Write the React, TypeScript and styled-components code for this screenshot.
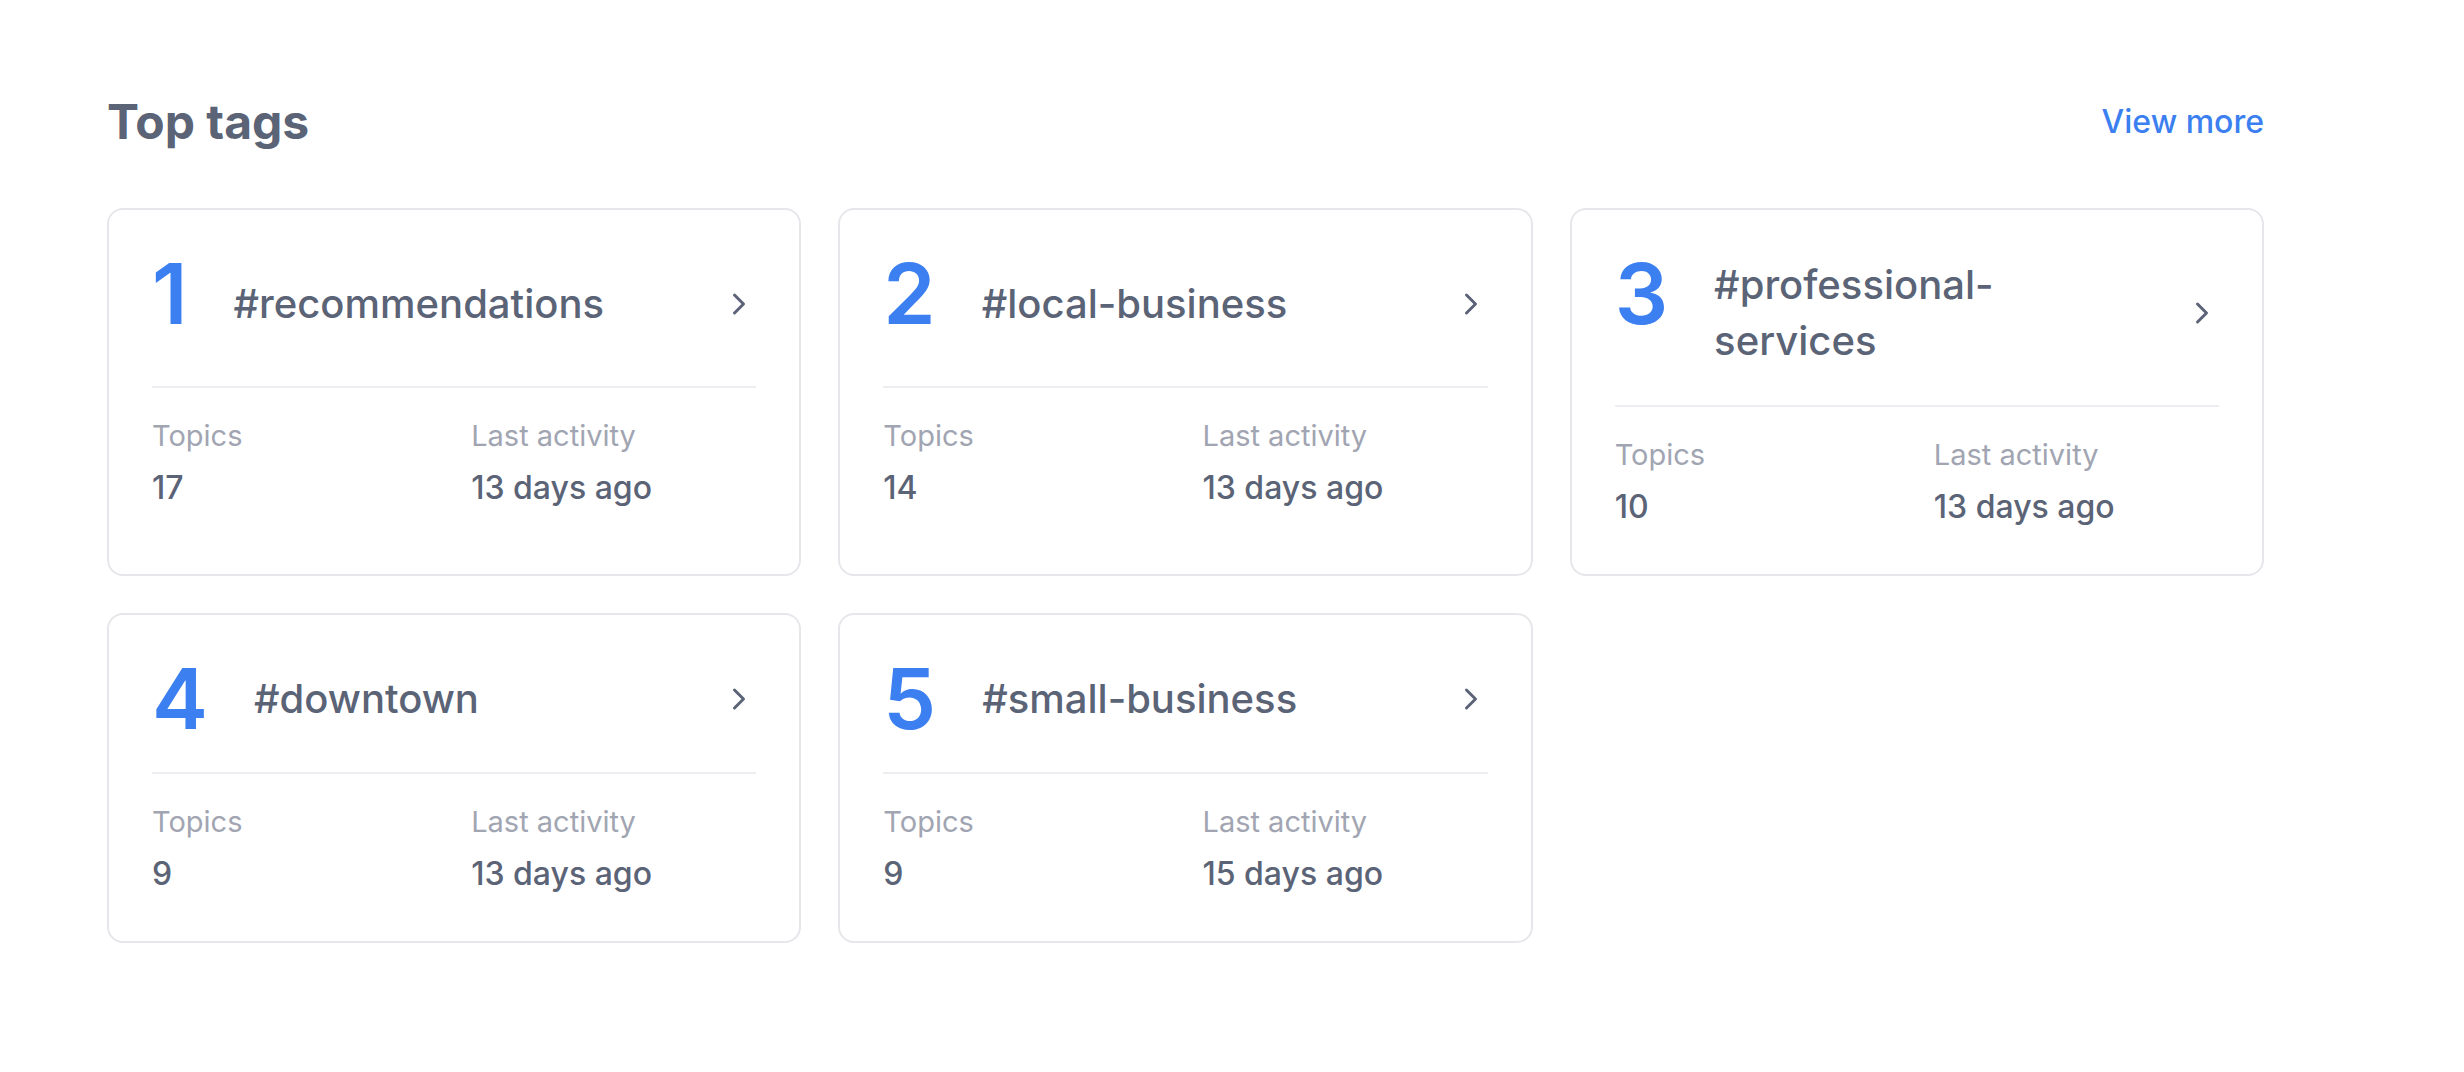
import React from 'react';
import styled, { createGlobalStyle } from 'styled-components';

interface Tag {
    rank: number;
    name: string;
    topics: number;
    lastActivity: string;
}

const tags: Tag[] = [
    { rank: 1, name: '#recommendations', topics: 17, lastActivity: '13 days ago' },
    { rank: 2, name: '#local-business', topics: 14, lastActivity: '13 days ago' },
    { rank: 3, name: '#professional-services', topics: 10, lastActivity: '13 days ago' },
    { rank: 4, name: '#downtown', topics: 9, lastActivity: '13 days ago' },
    { rank: 5, name: '#small-business', topics: 9, lastActivity: '15 days ago' },
];

const GlobalStyle = createGlobalStyle`
    html, body {
        margin: 0;
        padding: 0;
        background: #ffffff;
        font-family: Inter, "Noto Sans", "Liberation Sans", sans-serif;
        -webkit-font-smoothing: antialiased;
    }
`

const Page = styled.main`
    box-sizing: border-box;
    width: 2264px;
    padding: 90px 0 0 107px;
`

const SectionHeader = styled.div`
    display: flex;
    align-items: center;
    justify-content: space-between;
    height: 64px;
    margin-bottom: 54px;
`

const Title = styled.h2`
    margin: 0;
    font-size: 48px;
    line-height: 64px;
    font-weight: 650;
    color: #5b6376;
`

const ViewMore = styled.a`
    font-size: 32px;
    line-height: 48px;
    font-weight: 500;
    color: #3b7ff0;
    text-decoration: none;
    cursor: pointer;
`

const Grid = styled.div`
    display: grid;
    grid-template-columns: repeat(3, 1fr);
    gap: 37px;
`

const Card = styled.div`
    box-sizing: border-box;
    display: flex;
    flex-direction: column;
    border: 2px solid #e6e7eb;
    border-radius: 16px;
    padding: 47px 43px 43px;
    background: #ffffff;
`

const Header = styled.div`
    flex: 1 1 auto;
    display: flex;
    align-items: center;
    gap: 30px;
    margin-bottom: 36px;
`

const Rank = styled.span`
    align-self: flex-start;
    font-size: 84px;
    line-height: 74px;
    font-weight: 600;
    color: #3b7ff0;
    margin-right: 16px;
`

const TagName = styled.span`
    flex: 1;
    font-size: 40px;
    line-height: 56px;
    font-weight: 500;
    color: #5b6376;
`

const Chevron = styled.svg`
    flex-shrink: 0;
    width: 40px;
    height: 40px;
    color: #5b6376;
`

const Footer = styled.div`
    flex: 1 1 auto;
    border-top: 2px solid #eceef1;
    padding-top: 28px;
`

const Stats = styled.div`
    display: grid;
    grid-template-columns: repeat(2, 1fr);
    column-gap: 34px;
`

const Label = styled.div`
    font-size: 29px;
    line-height: 40px;
    font-weight: 400;
    color: #a1a5b2;
`

const Value = styled.div`
    margin-top: 8px;
    font-size: 32px;
    line-height: 48px;
    font-weight: 500;
    color: #5b6376;
`

const TagCard = ({ tag }: { tag: Tag }) => (
    <Card>
        <Header>
            <Rank>{tag.rank}</Rank>
            <TagName>{tag.name}</TagName>
            <Chevron viewBox="0 0 40 40" fill="none">
                <polyline
                    points="18.5,11 27.5,20 18.5,29"
                    stroke="currentColor"
                    strokeWidth="3"
                    strokeLinecap="round"
                    strokeLinejoin="round"
                />
            </Chevron>
        </Header>
        <Footer>
            <Stats>
                <div>
                    <Label>Topics</Label>
                    <Value>{tag.topics}</Value>
                </div>
                <div>
                    <Label>Last activity</Label>
                    <Value>{tag.lastActivity}</Value>
                </div>
            </Stats>
        </Footer>
    </Card>
);

const App = () => {
    return (
        <>
            <GlobalStyle />
            <Page>
                <SectionHeader>
                    <Title>Top tags</Title>
                    <ViewMore>View more</ViewMore>
                </SectionHeader>
                <Grid>
                    {tags.map((tag) => (
                        <TagCard key={tag.rank} tag={tag} />
                    ))}
                </Grid>
            </Page>
        </>
    );
};

export default App;
